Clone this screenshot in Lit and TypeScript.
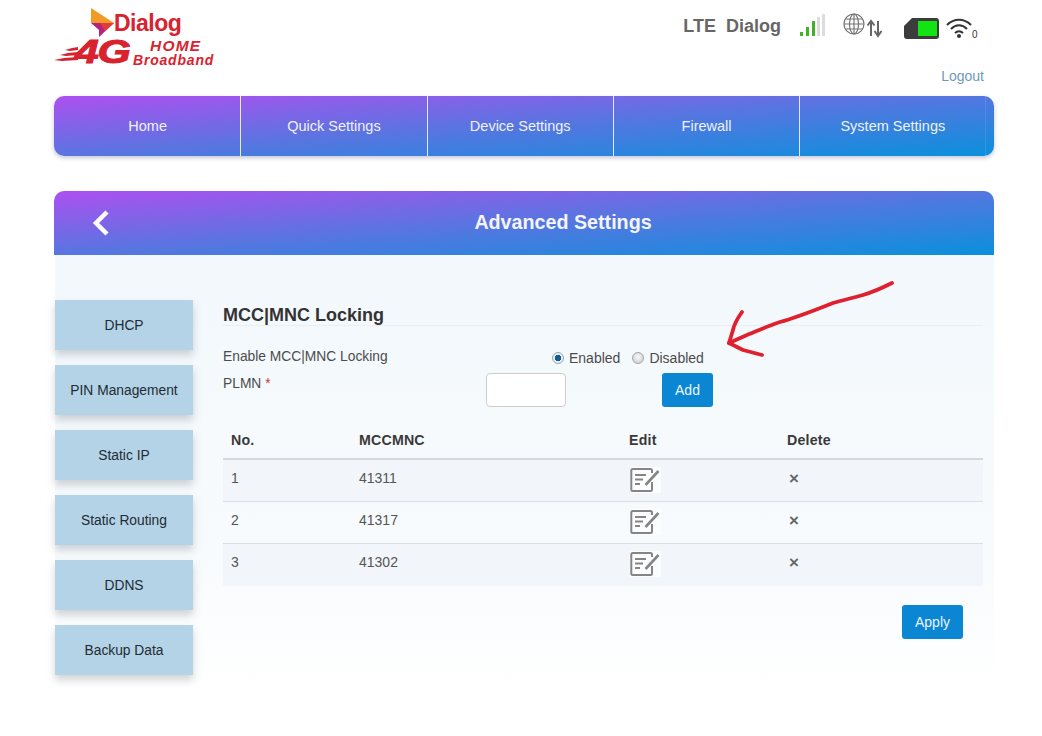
import { LitElement, css, html, svg } from 'lit';
import { customElement } from 'lit/decorators.js';

const NAV = ['Home', 'Quick Settings', 'Device Settings', 'Firewall', 'System Settings'];
const SIDE = ['DHCP', 'PIN Management', 'Static IP', 'Static Routing', 'DDNS', 'Backup Data'];
const ROWS = ['41311', '41317', '41302'];

const editIcon = svg`<svg class="edit" width="31" height="26" viewBox="0 0 31 26" fill="none" stroke="#858585">
  <path d="M22 6V3.500C22 2.600 21.400 2 20.500 2H2.800C1.900 2 1.300 2.600 1.300 3.500V22.500C1.300 23.400 1.900 24 2.800 24H20.500C21.400 24 22 23.400 22 22.500V15" stroke-width="2"/>
  <path d="M5 8H16M5 12.500H13M5 17H10" stroke-width="1.800"/>
  <path d="M15.500 18L28.500 4" stroke-width="2.600"/>
</svg>`;

@customElement('app-root')
export class AppRoot extends LitElement {
  static styles = css`
    :host {
      display: block;
      position: relative;
      height: 736px;
      overflow: hidden;
      background: #fff;
      font-family: 'Liberation Sans', Arial, sans-serif;
      font-size: 14px;
      color: #333;
    }
    .page {
      margin: 0 48px 0 54px;
    }
    .header {
      height: 96px;
      display: flex;
      justify-content: space-between;
    }
    .logo {
      width: 162px;
      height: 70px;
      padding-top: 6px;
      color: #d8232f;
      font-weight: 700;
    }
    .brand {
      display: flex;
      align-items: center;
      margin-left: 36px;
      height: 31px;
    }
    .brand span {
      font-size: 23px;
      letter-spacing: -0.5px;
      margin-left: -1px;
      margin-top: 4px;
    }
    .tagline {
      display: flex;
      font-style: italic;
    }
    .streaks {
      flex: none;
      margin-top: 7px;
    }
    .fast {
      font-size: 33px;
      line-height: 29px;
      font-weight: 700;
      letter-spacing: -1px;
      -webkit-text-stroke: 1px #d8232f;
      transform: scaleX(1.3);
      transform-origin: left;
      width: 56px;
      margin-left: -3px;
    }
    .product {
      margin-top: 2px;
      margin-left: 2px;
      white-space: nowrap;
    }
    .product b,
    .product i {
      display: block;
      line-height: 14px;
    }
    .product b {
      font-size: 15.500px;
      margin-left: 17px;
      letter-spacing: 1.200px;
    }
    .product i {
      font-size: 14px;
      letter-spacing: 0.800px;
    }
    .side {
      width: 310px;
      text-align: right;
      padding-right: 10px;
      box-sizing: content-box;
    }
    .status {
      display: flex;
      align-items: flex-start;
      height: 68px;
      color: #666;
      font-weight: 700;
      font-size: 18px;
      padding-top: 12px;
      padding-right: 6px;
      box-sizing: border-box;
      justify-content: flex-end;
    }
    .status .net {
      margin-top: 4px;
      margin-right: 18px;
    }
    .status .net + .net {
      margin-left: -8px;
    }
    .status svg {
      flex: none;
      display: block;
    }
    .signal {
      margin-right: 17px;
      margin-top: 1px;
    }
    .globe {
      margin-right: 20px;
    }
    .battery {
      margin-top: 6px;
      margin-right: 7px;
    }
    .wifi {
      margin-top: 5px;
    }
    .logout {
      color: #6e9ab5;
      font-size: 14px;
      line-height: 16px;
    }
    .nav {
      display: flex;
      height: 60px;
      width: 940px;
      border-radius: 10px;
      background: linear-gradient(176deg, #ad50f0 0%, #5676e0 50%, #0a90dc 100%);
      box-shadow: 0 2px 4px rgba(90, 90, 140, 0.35);
      padding: 0 7px 0 1px;
      box-sizing: border-box;
    }
    .nav div {
      width: 186.300px;
      flex: none;
      display: flex;
      align-items: center;
      justify-content: center;
      color: #eef2fb;
      border-right: 1px solid #e4ecf8;
      box-sizing: border-box;
      font-size: 14.500px;
      padding-bottom: 1px;
    }
    .nav div:last-child {
      border-right: 1px solid rgba(255, 255, 255, 0.1);
    }
    .title {
      margin-top: 35px;
      width: 940px;
      height: 64px;
      border-radius: 10px 10px 0 0;
      background: linear-gradient(176deg, #ad50f0 0%, #5676e0 50%, #0a90dc 100%);
      display: flex;
      align-items: center;
      justify-content: center;
      position: relative;
      color: #f4f4fc;
      font-size: 19.700px;
      font-weight: 700;
      padding-left: 78px;
      padding-bottom: 2px;
      box-sizing: border-box;
    }
    .back {
      position: absolute;
      left: 37px;
      top: 18px;
    }
    .panel {
      width: 939px;
      height: 435px;
      margin-left: 1px;
      background: linear-gradient(180deg, #f2f8fc 0%, #f8fbfd 70%, #fff 100%);
      display: flex;
      box-sizing: border-box;
      padding: 45px 11px 0 0;
    }
    .menu {
      width: 138px;
      flex: none;
      display: flex;
      flex-direction: column;
      gap: 15px;
    }
    .menu div {
      height: 50px;
      background: #b4d3e7;
      box-shadow: 0 5px 8px rgba(100, 110, 120, 0.3);
      display: flex;
      align-items: center;
      justify-content: center;
      font-size: 13.800px;
      color: #222c33;
    }
    .main {
      flex: 1;
      margin-left: 30px;
    }
    h2 {
      margin: 0;
      font-size: 18px;
      line-height: 26px;
      height: 23px;
      padding-top: 2px;
      color: #333;
      border-bottom: 1px solid #eaeff2;
    }
    .line {
      display: flex;
      color: #4c4c4c;
      font-size: 14px;
    }
    .line label {
      font-size: 13.800px;
    }
    .enable {
      margin-top: 23px;
      height: 17px;
    }
    .enable label {
      width: 329px;
      flex: none;
    }
    .radio {
      display: flex;
      align-items: center;
      margin-top: 1px;
    }
    .radio i {
      width: 12px;
      height: 12px;
      border-radius: 50%;
      border: 1px solid #9ea6ad;
      background: radial-gradient(circle at 50% 40%, #f8f8f8, #c8c8c8);
      box-sizing: border-box;
      margin-right: 5px;
    }
    .radio i.on {
      background: radial-gradient(circle at 50% 50%, #0f5e92 0 3px, #e8eef2 3.500px);
    }
    .radio + .radio {
      margin-left: 12px;
    }
    .plmn {
      margin-top: 7px;
      height: 51px;
    }
    .plmn label {
      width: 263px;
      flex: none;
      margin-top: 3px;
    }
    .plmn label em {
      color: #c33;
      font-style: normal;
    }
    .plmn input {
      width: 80px;
      height: 34px;
      box-sizing: border-box;
      border: 1px solid #ccc;
      border-radius: 4px;
      background: #fff;
      margin: 0;
    }
    .btn {
      display: flex;
      align-items: center;
      justify-content: center;
      background: #0b86d2;
      color: #e8f5fd;
      height: 34px;
      border-radius: 3px;
      font-size: 14px;
    }
    .add {
      width: 51px;
      margin-left: 96px;
    }
    .tr {
      display: grid;
      grid-template-columns: 128px 270px 158px 1fr;
      height: 42px;
      align-items: center;
      padding-left: 8px;
      border-bottom: 1px solid #dcdfe2;
      box-sizing: border-box;
      color: #555;
    }
    .tr.head {
      height: 36px;
      font-weight: 700;
      font-size: 14.200px;
      letter-spacing: 0.200px;
      color: #3a3a3a;
      border-bottom: 2px solid #d6d9dc;
      padding-bottom: 2px;
    }
    .tr.odd {
      background: #f2f6fa;
    }
    .tr:last-child {
      border-bottom-color: transparent;
    }
    .tr span {
      padding-bottom: 5px;
    }
    .tr.head span {
      padding-bottom: 0;
    }
    .edit {
      display: block;
      background: #fbfdfe;
      margin: 0 0 2px 1px;
    }
    .tr .x {
      color: #666;
      font-size: 17px;
      font-weight: 700;
      padding-left: 2px;
      padding-bottom: 3px;
    }
    .apply-row {
      display: flex;
      justify-content: flex-end;
      padding-right: 20px;
      margin-top: 19px;
    }
    .apply {
      width: 61px;
    }
    .arrow {
      position: absolute;
      left: 720px;
      top: 275px;
    }
  `;

  render() {
    return html`
      <div class="page">
        <div class="header">
          <div class="logo">
            <div class="brand">
              <svg width="25" height="30" viewBox="0 0 25 30">
                <path d="M1 1L24 16H1Z" fill="#f39a26" />
                <path d="M1 16H24L9 30V23Z" fill="#b3227f" />
                <path d="M10 16H24L15 24Z" fill="#e23b3b" />
              </svg>
              <span>Dialog</span>
            </div>
            <div class="tagline">
              <svg class="streaks" width="24" height="20" viewBox="0 0 24 20" fill="#d8232f">
                <path d="M0 16L10 14L24 13V16L8 17Z" />
                <path d="M6 11L14 9L24 8V11L12 12Z" />
                <path d="M11 6L18 4L24 3V6L16 7Z" />
              </svg>
              <div class="fast">4G</div>
              <div class="product"><b>HOME</b><i>Broadband</i></div>
            </div>
          </div>
          <div class="side">
            <div class="status">
              <span class="net">LTE</span>
              <span class="net">Dialog</span>
              <svg class="signal" width="26" height="24" viewBox="0 0 26 24">
                <rect x="1" y="19" width="3" height="4" fill="#43b02a" />
                <rect x="7" y="14" width="3" height="9" fill="#43b02a" />
                <rect x="13" y="8" width="3" height="15" fill="#43b02a" />
                <rect x="18" y="4" width="3" height="19" fill="#dcdcdc" />
                <rect x="23" y="1" width="3" height="22" fill="#dcdcdc" />
              </svg>
              <svg class="globe" width="42" height="26" viewBox="0 0 42 26" fill="none" stroke="#777" stroke-width="1.200">
                <circle cx="12" cy="12" r="10" />
                <ellipse cx="12" cy="12" rx="4.500" ry="10" />
                <path d="M12 2V22M2 12H22M3.500 7H20.500M3.500 17H20.500" />
                <path d="M29 24V10M25.500 13.500L29 9L32.500 13.500M36 9V23M32.500 19L36 24L39.500 19" stroke-width="2" stroke="#666" />
              </svg>
              <svg class="battery" width="35" height="21" viewBox="0 0 35 21">
                <path d="M8 0H32Q35 0 35 3V18Q35 21 32 21H3Q0 21 0 18V8Z" fill="#3c3c3c" />
                <rect x="14" y="3" width="19" height="15" fill="#12e312" />
              </svg>
              <svg class="wifi" width="32" height="22" viewBox="0 0 32 22" fill="none" stroke="#333" stroke-width="2">
                <path d="M1 8C8 1 18 1 25 8M5 12C10 7 16 7 21 12M9 16C11.500 13.500 14.500 13.500 17 16" />
                <circle cx="13" cy="19" r="2" fill="#333" stroke="none" />
                <text x="26" y="21" font-size="10" font-weight="400" fill="#333" stroke="none" font-family="Liberation Sans">0</text>
              </svg>
            </div>
            <div class="logout">Logout</div>
          </div>
        </div>

        <div class="nav">${NAV.map((n) => html`<div>${n}</div>`)}</div>

        <div class="title">
          <svg class="back" width="20" height="28" viewBox="0 0 20 28" fill="none" stroke="#fff" stroke-width="4.500">
            <path d="M16 3L5 14L16 25" />
          </svg>
          Advanced Settings
        </div>

        <div class="panel">
          <div class="menu">${SIDE.map((s) => html`<div>${s}</div>`)}</div>
          <div class="main">
            <h2>MCC|MNC Locking</h2>
            <div class="line enable">
              <label>Enable MCC|MNC Locking</label>
              <span class="radio"><i class="on"></i>Enabled</span>
              <span class="radio"><i></i>Disabled</span>
            </div>
            <div class="line plmn">
              <label>PLMN <em>*</em></label>
              <input />
              <div class="btn add">Add</div>
            </div>
            <div>
              <div class="tr head">
                <span>No.</span><span>MCCMNC</span><span>Edit</span><span>Delete</span>
              </div>
              ${ROWS.map(
                (r, i) => html`
                  <div class="tr ${i % 2 === 0 ? 'odd' : ''}">
                    <span>${i + 1}</span>
                    <span>${r}</span>
                    <div>${editIcon}</div>
                    <span class="x">×</span>
                  </div>
                `
              )}
            </div>
            <div class="apply-row"><div class="btn apply">Apply</div></div>
          </div>
        </div>
      </div>

      <svg class="arrow" width="180" height="90" viewBox="720 275 180 90" fill="none" stroke="#e0202e" stroke-width="3.800" stroke-linecap="round" stroke-linejoin="round">
        <path d="M892 283C884 287 873 292 863 295C853 298 843 300 833 303C815 310 798 317 780 322C768 326 757 331 747 335L729 343" />
        <path d="M742 312C737 319 734 325 733 330L729 343L743 350L762 355" />
      </svg>
    `;
  }
}
